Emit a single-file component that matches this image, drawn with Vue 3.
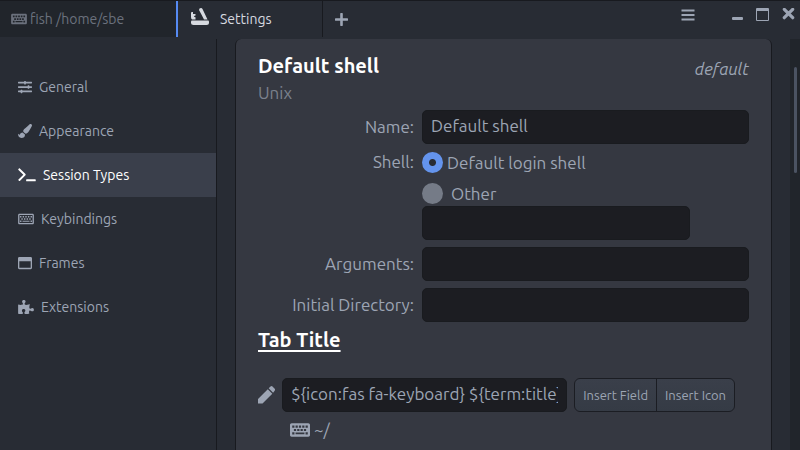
<script setup>
import { ref } from 'vue'

const navItems = [
  { id: 'general', label: 'General', w: 14, box: '0 0 512 512', d: 'M496 384H160v-16c0-8.8-7.2-16-16-16h-32c-8.8 0-16 7.2-16 16v16H16c-8.8 0-16 7.2-16 16v32c0 8.800 7.200 16 16 16h80v16c0 8.800 7.200 16 16 16h32c8.800 0 16-7.200 16-16v-16h336c8.800 0 16-7.200 16-16v-32c0-8.800-7.200-16-16-16zm0-160h-80v-16c0-8.800-7.200-16-16-16h-32c-8.800 0-16 7.200-16 16v16H16c-8.800 0-16 7.200-16 16v32c0 8.800 7.200 16 16 16h336v16c0 8.800 7.200 16 16 16h32c8.800 0 16-7.200 16-16v-16h80c8.800 0 16-7.200 16-16v-32c0-8.800-7.200-16-16-16zm0-160H288V48c0-8.800-7.200-16-16-16h-32c-8.800 0-16 7.200-16 16v16H16C7.200 64 0 71.200 0 80v32c0 8.800 7.200 16 16 16h208v16c0 8.800 7.200 16 16 16h32c8.800 0 16-7.200 16-16v-16h208c8.800 0 16-7.200 16-16V80c0-8.800-7.200-16-16-16z' },
  { id: 'appearance', label: 'Appearance', w: 14, box: '0 0 512 512', d: 'M167.02 309.34c-40.12 2.58-76.53 17.86-97.19 72.3-2.35 6.21-8 9.98-14.59 9.98-11.11 0-45.46-27.67-55.25-34.35C0 439.62 37.93 512 128 512c75.86 0 128-43.77 128-120.19 0-3.11-.65-6.08-.97-9.13l-88.01-73.34zM457.89 0c-15.16 0-29.37 6.71-40.21 16.45C213.27 199.05 192 203.34 192 257.09c0 13.7 3.25 26.76 8.73 38.7l63.82 53.18c7.21 1.8 14.64 3.03 22.39 3.03 62.11 0 98.11-45.47 211.16-256.46 7.38-14.35 13.9-29.85 13.9-45.99C512 20.64 486 0 457.89 0z' },
  { id: 'sessions', label: 'Session Types', w: 18, box: '0 0 640 512', d: 'M34 12L0 46Q-4 58 8 70L186 244L8 418Q-2 428 0 442L34 476Q46 484 58 474L264 268Q284 244 264 220L58 14Q46 4 34 12zM312 408H616Q640 408 640 432V464Q640 488 616 488H312Q288 488 288 464V432Q288 408 312 408z' },
  { id: 'keybindings', label: 'Keybindings', w: 16, box: '0 0 576 512', d: 'M528 64H48C21 64 0 85 0 112v288c0 27 21 48 48 48h480c27 0 48-21 48-48V112c0-27-21-48-48-48zM48 112H528V400H48zM70 148V200H122V148zM166 148V200H218V148zM262 148V200H314V148zM358 148V200H410V148zM454 148V200H506V148zM118 230V282H170V230zM214 230V282H266V230zM310 230V282H362V230zM406 230V282H458V230zM70 312V364H122V312zM160 318V354H416V318zM454 312V364H506V312z' },
  { id: 'frames', label: 'Frames', w: 14, box: '0 0 512 512', d: 'M464 32H48C21.5 32 0 53.5 0 80v352c0 26.5 21.5 48 48 48h416c26.5 0 48-21.5 48-48V80c0-26.500-21.500-48-48-48zm0 394c0 3.300-2.700 6-6 6H54c-3.300 0-6-2.700-6-6V192h416v234z' },
  { id: 'extensions', label: 'Extensions', w: 16, box: '0 0 576 512', d: 'M519.442 288.651c-41.519 0-59.5 31.593-82.058 31.593C377.409 320.244 432 144 432 144s-196.288 80-196.288-3.297c0-35.827 36.288-46.25 36.288-85.985C272 19.216 243.885 0 210.539 0c-34.654 0-66.366 18.891-66.366 56.346 0 41.364 31.711 59.277 31.711 81.75C175.885 207.719 0 166.758 0 166.758v333.237s178.635 41.047 178.635-28.662c0-22.473-40-40.107-40-81.471 0-37.456 29.25-56.346 63.577-56.346 33.673 0 61.788 19.216 61.788 54.717 0 39.735-36.288 50.158-36.288 85.985 0 60.803 129.675 25.73 181.23 25.73 0 0-34.725-120.101 25.827-120.101 35.962 0 46.423 36.152 86.308 36.152C556.712 416 576 387.99 576 354.443c0-34.199-18.962-65.792-56.558-65.792z' }
]

const keyboardPath = 'M528 64H48C21 64 0 85 0 112v288c0 27 21 48 48 48h480c27 0 48-21 48-48V112c0-27-21-48-48-48zM64 128H128V192H64zM160 128H224V192H160zM256 128H320V192H256zM352 128H416V192H352zM448 128H512V192H448zM112 224H176V288H112zM208 224H272V288H208zM304 224H368V288H304zM400 224H464V288H400zM64 320H128V384H64zM160 328H416V376H160zM448 320H512V384H448z'

const active = ref('sessions')
const name = ref('Default shell')
const shell = ref('login')
const customShell = ref('')
const args = ref('')
const directory = ref('')
const title = ref('${icon:fas fa-keyboard} ${term:title}')
</script>

<template>
  <div class="window">
    <header class="topbar">
      <button class="tab terminal-tab" type="button">
        <svg width="16" height="14" viewBox="0 0 576 512"><path fill-rule="evenodd" :d="keyboardPath" /></svg>
        <span>fish /home/sbe</span>
      </button>
      <button class="tab settings-tab" type="button">
        <svg width="18" height="18" viewBox="0 0 18 18">
          <path d="M1 12.500H17Q18 12.500 18 13.500V14.500Q18 17 15.500 17H2.500Q0 17 0 14.500V13.500Q0 12.500 1 12.500z" />
          <path d="M8 2Q8 0 10 0Q11 0 11.500 1L16.500 11.500H13Q10.500 6.500 8 2z" />
          <path d="M0 5Q0 4 1 4H2V6H4.500V7.500L3 8Q3 9.300 4.500 9.300V11.500H1Q0 10.500 0 9z" />
        </svg>
        <span>Settings</span>
      </button>
      <button class="new-tab" type="button" aria-label="New tab">
        <svg width="13" height="13" viewBox="0 0 13 13"><path d="M6.500 1V12M1 6.500H12" stroke="currentColor" stroke-width="2.600" stroke-linecap="round" /></svg>
      </button>
      <div class="window-controls">
        <button class="menu" type="button" aria-label="Menu">
          <svg width="14" height="14" viewBox="0 0 14 14"><path d="M.5 1.500H13.500V3.500H.5zM.5 6H13.500V8H.5zM.5 10.500H13.500V12.500H.5z" /></svg>
        </button>
        <button type="button" aria-label="Minimize">
          <svg width="11" height="14" viewBox="0 0 11 14"><rect x="0" y="9" width="11" height="3" rx="1" /></svg>
        </button>
        <button type="button" aria-label="Maximize">
          <svg width="13" height="14" viewBox="0 0 13 14"><path fill-rule="evenodd" d="M1 0H12Q13 0 13 1V12Q13 13 12 13H1Q0 13 0 12V1Q0 0 1 0zM1 3V12H12V3z" /></svg>
        </button>
        <button type="button" aria-label="Close">
          <svg width="13" height="14" viewBox="0 0 13 14"><path d="M2.300 1.300L10.700 9.700M10.700 1.300L2.300 9.700" stroke="currentColor" stroke-width="3.200" stroke-linecap="round" /></svg>
        </button>
      </div>
    </header>

    <div class="body">
      <nav class="sidebar">
        <a
          v-for="item in navItems"
          :key="item.id"
          href="#"
          class="nav-item"
          :class="{ active: active === item.id }"
          @click.prevent="active = item.id"
        >
          <svg :width="item.w" height="14" :viewBox="item.box"><path fill-rule="evenodd" :d="item.d" /></svg>
          <span>{{ item.label }}</span>
        </a>
      </nav>

      <main class="content">
        <section class="card">
          <div class="card-head">
            <h2>Default shell</h2>
            <em>default</em>
          </div>
          <p class="platform">Unix</p>

          <form class="fields" @submit.prevent>
            <label class="field-label" for="name">Name:</label>
            <input id="name" v-model="name" class="text" type="text" />

            <span id="shell-label" class="field-label shell-label">Shell:</span>
            <div class="shell" role="radiogroup" aria-labelledby="shell-label">
              <div class="choice">
                <input id="shell-login" v-model="shell" type="radio" name="shell" value="login" />
                <label for="shell-login">Default login shell</label>
              </div>
              <div class="choice other">
                <input id="shell-other" v-model="shell" type="radio" name="shell" value="other" />
                <label for="shell-other">Other</label>
              </div>
              <input v-model="customShell" class="text custom" type="text" aria-label="Other shell" />
            </div>

            <label class="field-label" for="args">Arguments:</label>
            <input id="args" v-model="args" class="text" type="text" />

            <label class="field-label" for="dir">Initial Directory:</label>
            <input id="dir" v-model="directory" class="text" type="text" />
          </form>

          <h3>Tab Title</h3>
          <div class="title-row">
            <label for="tab-title" aria-label="Tab title">
              <svg width="17" height="18" viewBox="0 0 17 18"><path d="M0 17.500V13L9.800 3.200L14.300 7.700L4.500 17.500zM10.700 2.300L12.500.5Q13.500-.3 14.500.5L16.700 2.700Q17.400 3.700 16.700 4.700L15.100 6.700z" /></svg>
            </label>
            <input id="tab-title" v-model="title" class="text" type="text" />
            <div class="button-group">
              <button type="button">Insert Field</button>
              <button type="button">Insert Icon</button>
            </div>
          </div>
          <div class="preview">
            <svg width="20" height="18" viewBox="0 0 576 512"><path fill-rule="evenodd" :d="keyboardPath" /></svg>
            <span>~/</span>
          </div>
        </section>
      </main>
      <div class="scrollbar"><div class="thumb"></div></div>
    </div>
  </div>
</template>

<style>
body {
  background: #282c34;
}
</style>

<style scoped>
.window,
.window * {
  box-sizing: border-box;
}
.window {
  display: flex;
  flex-direction: column;
  height: 100vh;
  overflow: hidden;
  background: #282c34;
  border-top: 1px solid #181a1f;
  color: #9da5b4;
  font-family: Ubuntu, "Noto Sans", sans-serif;
  font-size: 17px;
}
svg {
  flex: none;
  display: block;
  fill: currentColor;
}
button {
  font: inherit;
  color: inherit;
  background: none;
  border: 0;
  margin: 0;
  padding: 0;
}
.topbar {
  display: flex;
  flex: none;
  height: 38px;
}
.tab {
  display: flex;
  align-items: center;
  height: 36px;
  font-size: 14px;
}
.terminal-tab {
  width: 22%;
  gap: 3px;
  padding-left: 11px;
  background: #21252b;
  color: #6b717d;
}
.settings-tab {
  width: 147px;
  gap: 11px;
  padding-left: 13px;
  border-left: 2px solid #568af2;
  border-right: 1px solid #181a1f;
  color: #d7dae0;
}
.settings-tab svg {
  margin-bottom: 4px;
}
.new-tab {
  height: 37px;
  padding: 0 12px;
}
.window-controls {
  display: flex;
  align-items: flex-start;
  gap: 13px;
  margin-left: auto;
  padding: 7px 5px 0 0;
}
.window-controls .menu {
  margin-right: 24px;
}
.body {
  display: flex;
  flex: 1;
  min-height: 0;
}
.sidebar {
  flex: none;
  width: 217px;
  padding-top: 26px;
  border-right: 1px solid #181a1f;
}
.nav-item {
  display: flex;
  align-items: center;
  gap: 7px;
  height: 44px;
  padding-left: 18px;
  color: #9da5b4;
  font-size: 14px;
  text-decoration: none;
}
.nav-item.active {
  background: #3a3f4b;
  color: #fff;
}
.content {
  flex: 1;
  min-width: 0;
  padding: 0 18px;
  overflow: hidden;
}
.card {
  min-height: 520px;
  padding: 13px 22px;
  border: 1px solid #181a1f;
  border-width: 0 1px;
  border-radius: 6px;
  background: #353841;
}
.card-head {
  display: flex;
  justify-content: space-between;
  height: 28px;
}
h2,
h3 {
  margin: 0;
  color: #fff;
  font-size: 20px;
  line-height: 28px;
}
.card-head em {
  line-height: 34px;
}
.platform {
  margin: 0 0 4px;
  color: #7b818d;
  line-height: 26px;
}
.fields {
  display: grid;
  grid-template-columns: 156px 1fr;
  gap: 7px 8px;
}
.field-label {
  line-height: 33px;
  text-align: right;
}
.shell-label {
  line-height: 22px;
}
.text {
  width: 100%;
  min-width: 0;
  height: 34px;
  padding: 0 8px 3px;
  border: 1px solid #191b1f;
  border-radius: 5px;
  outline: 0;
  background: #1c1d22;
  color: #9da5b4;
  font: inherit;
}
.choice {
  display: flex;
  align-items: center;
  gap: 4px;
  height: 22px;
}
.choice.other {
  gap: 8px;
  margin: 9px 0 2px;
}
.choice input {
  appearance: none;
  width: 21px;
  height: 21px;
  margin: 0;
  border-radius: 50%;
  background: #757b87;
}
.choice input:checked {
  background: radial-gradient(circle, #282c34 3px, #6494ed 4px);
}
.text.custom {
  display: block;
  width: 82%;
}
h3 {
  margin: 4px 0 24px;
  text-decoration: underline;
  text-decoration-thickness: 2px;
  text-underline-offset: 3px;
}
.title-row {
  display: flex;
  align-items: center;
  gap: 7px;
  padding-right: 14px;
}
.title-row .text {
  flex: 1;
}
.button-group {
  display: flex;
  height: 34px;
  border: 1px solid #1b1d23;
  border-radius: 6px;
  background: linear-gradient(#3a3f4a, #353b45);
  font-size: 13px;
}
.button-group button {
  padding: 0 8px;
}
.button-group button + button {
  border-left: 1px solid #1b1d23;
}
.preview {
  display: flex;
  align-items: center;
  gap: 4px;
  margin-top: 5px;
  padding-left: 32px;
  line-height: 26px;
}
.scrollbar {
  flex: none;
  width: 10px;
  padding: 28px 3px 0 4px;
  background: #21252b;
}
.thumb {
  height: 106px;
  border-radius: 2px;
  background: #4b5362;
}
</style>
